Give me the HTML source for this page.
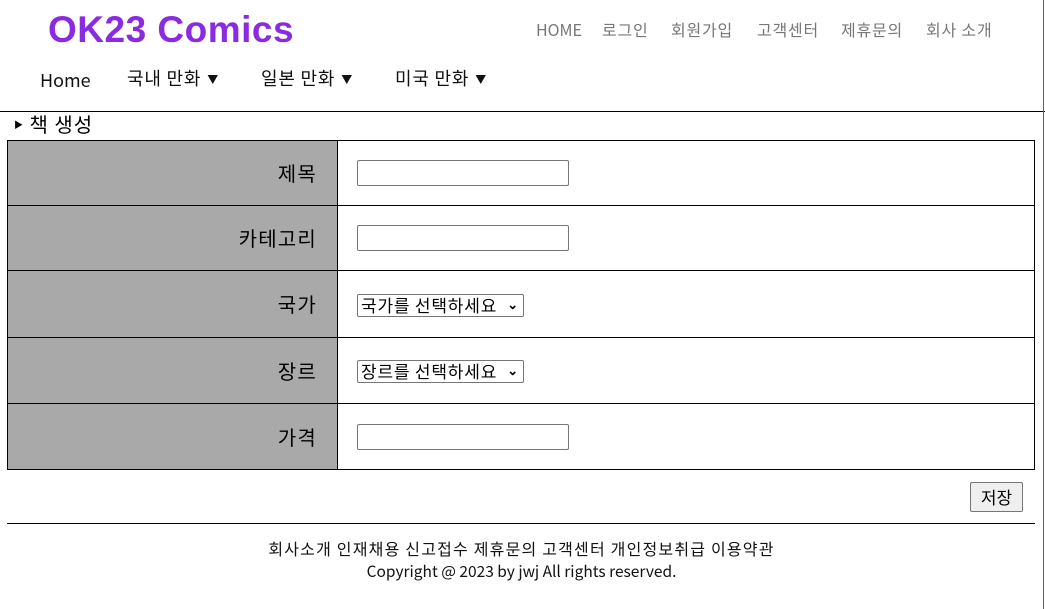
<!DOCTYPE html>
<html><head><meta charset="utf-8"><style>
body{margin:0;width:1045px;height:609px;position:relative;font-family:"Noto Sans CJK KR","Liberation Sans",sans-serif;background:#fff;overflow:hidden}
.a{position:absolute;white-space:nowrap;line-height:1.2}
.logo{left:48px;top:8px;font-size:37px;font-weight:bold;color:#8a2be2;letter-spacing:0.5px;font-family:"Liberation Sans",sans-serif}
.top{top:20px;font-size:16px;color:#777;letter-spacing:0.8px}
.nav{top:68px;font-size:18px;color:#111;letter-spacing:0.8px}
.nav span{font-size:11px;margin-left:6px;vertical-align:2px}
table{position:absolute;left:7px;top:140px;width:1028px;border-collapse:collapse}
td{border:1px solid #000;padding:0;font-size:20px;line-height:1.2}
td.l{background:#a9a9a9;width:330px;text-align:right;padding-right:20px;box-sizing:border-box;letter-spacing:1.2px}
td.r{padding-left:19px}
.in{border:1px solid #767676;border-radius:2px;box-sizing:border-box;width:212px;height:26px}
.sel{display:inline-block;border:1px solid #767676;border-radius:2px;font-size:17px;padding:0 3px;height:23px;line-height:20px;box-sizing:border-box;width:167px;position:relative;letter-spacing:0.8px}
.sel b{position:absolute;right:4px;top:-1px;font-weight:bold;font-size:13px}
</style></head><body>
<div class="a logo">OK23 Comics</div>
<div class="a top" style="left:536px;letter-spacing:0">HOME</div>
<div class="a top" style="left:602px">로그인</div>
<div class="a top" style="left:671px">회원가입</div>
<div class="a top" style="left:757px">고객센터</div>
<div class="a top" style="left:841px">제휴문의</div>
<div class="a top" style="left:926px">회사 소개</div>
<div class="a nav" style="left:40px;top:70px;letter-spacing:0">Home</div>
<div class="a nav" style="left:127px">국내 만화<span>▼</span></div>
<div class="a nav" style="left:261px">일본 만화<span>▼</span></div>
<div class="a nav" style="left:395px">미국 만화<span>▼</span></div>
<div class="a" style="left:0;top:111px;width:1045px;height:1px;background:#000"></div>
<div class="a" style="left:1043px;top:0;width:1px;height:609px;background:#666"></div>
<div class="a" style="left:14px;top:112px;font-size:20px;letter-spacing:1px"><span style="font-size:9px;vertical-align:4px">▶</span> 책 생성</div>
<table>
<tr style="height:65px"><td class="l">제목</td><td class="r"><div class="in"></div></td></tr>
<tr style="height:65px"><td class="l">카테고리</td><td class="r"><div class="in"></div></td></tr>
<tr style="height:67px"><td class="l">국가</td><td class="r"><span class="sel">국가를 선택하세요<b>⌄</b></span></td></tr>
<tr style="height:66px"><td class="l">장르</td><td class="r"><span class="sel">장르를 선택하세요<b>⌄</b></span></td></tr>
<tr style="height:66px"><td class="l">가격</td><td class="r"><div class="in"></div></td></tr>
</table>
<div class="a" style="left:970px;top:482px;width:53px;height:30px;box-sizing:border-box;border:1px solid #767676;border-radius:2px;background:#efefef;font-size:17px;text-align:center;line-height:27px">저장</div>
<div class="a" style="left:7px;top:523px;width:1028px;height:1px;background:#000"></div>
<div class="a" style="left:0;width:1043px;text-align:center;top:539px;font-size:16px;letter-spacing:1.2px;color:#111">회사소개 인재채용 신고접수 제휴문의 고객센터 개인정보취급 이용약관</div>
<div class="a" style="left:0;width:1043px;text-align:center;top:562px;font-size:15.5px;color:#111">Copyright @ 2023 by jwj All rights reserved.</div>
</body></html>
